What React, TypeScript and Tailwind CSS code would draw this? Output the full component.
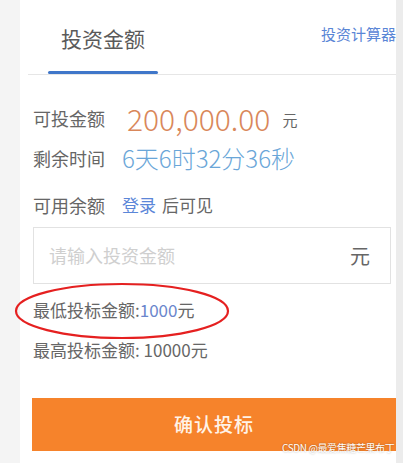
export default function App() {
  const font = { fontFamily: '"Noto Sans CJK SC", "Noto Sans", sans-serif' };
  return (
    <div className="w-[403px] h-[463px] bg-[#f2f2f2] flex overflow-hidden relative" style={font}>
      <div className="w-[20px] shrink-0 bg-[#f4f4f4]" />
      <div className="w-[376px] shrink-0 bg-white flex flex-col">
        {/* header tabs */}
        <div className="h-[74px] flex items-end justify-between">
          <div className="ml-[28px] w-[110px] flex flex-col items-center">
            <span className="text-[21px] leading-none text-[#5a5a5a] mb-[22px]">投资金额</span>
            <div className="w-full h-[3px] bg-[#3f76c9] rounded-sm" />
          </div>
          <span className="text-[15px] leading-none text-[#5a86d6] mb-[33px]">投资计算器</span>
        </div>
        <div className="ml-[8px] h-px bg-[#e6e6e6]" />

        {/* info rows */}
        <div className="pl-[13px] pt-[23px] flex flex-col">
          <div className="h-[40px] flex items-center">
            <span className="text-[18px] text-[#666] w-[87px]">可投金额</span>
            <span className="text-[30px] font-light text-[#d9875a] leading-none ml-[7px]">200,000.00</span>
            <span className="text-[15px] text-[#666] ml-[12px] mt-[4px]">元</span>
          </div>
          <div className="h-[40px] flex items-center">
            <span className="text-[18px] text-[#666] w-[87px]">剩余时间</span>
            <span className="text-[24px] font-light text-[#6aa6d8] leading-none ml-[2px]">6天6时32分36秒</span>
          </div>
          <div className="h-[40px] mt-[7px] flex items-center">
            <span className="text-[18px] text-[#666] w-[87px]">可用余额</span>
            <span className="text-[17px] text-[#5b86d8] ml-[2px]">登录</span>
            <span className="text-[17px] text-[#666] ml-[6px]">后可见</span>
          </div>
        </div>

        {/* input */}
        <div className="ml-[13px] mr-[5px] mt-[2px] h-[57px] border border-[#e2e2e2] flex items-center justify-between pl-[15px] pr-[20px]">
          <span className="text-[18px] text-[#cfcfcf]">请输入投资金额</span>
          <span className="text-[20px] text-[#666]">元</span>
        </div>

        <div className="pl-[13px] mt-[13px] h-[26px] flex items-center text-[17px] text-[#666]">
          最低投标金额:<span className="text-[#6a86cc]">1000</span>元
        </div>
        <div className="pl-[13px] mt-[14px] h-[26px] flex items-center text-[17px] text-[#666]">
          最高投标金额: 10000元
        </div>

        <div className="ml-[12px] mt-[35px] h-[53px] bg-[#f6832b] flex items-center justify-center">
          <span className="text-[19px] font-medium text-[#fff3e8] tracking-[1px]">确认投标</span>
        </div>
      </div>
      <div className="w-[7px] shrink-0 bg-[#ececec]" />

      <svg className="absolute left-[14px] top-[282px]" width="216" height="58" viewBox="0 0 216 58">
        <ellipse cx="108" cy="29" rx="106" ry="27" fill="none" stroke="#e52020" strokeWidth="2.2" />
      </svg>
      <span className="absolute left-[282px] top-[443px] text-[10px] tracking-[-0.4px] leading-none text-white whitespace-nowrap [text-shadow:0_0_2px_rgba(0,0,0,0.35)]">
        CSDN @最爱焦糖芒果布丁
      </span>
    </div>
  );
}
